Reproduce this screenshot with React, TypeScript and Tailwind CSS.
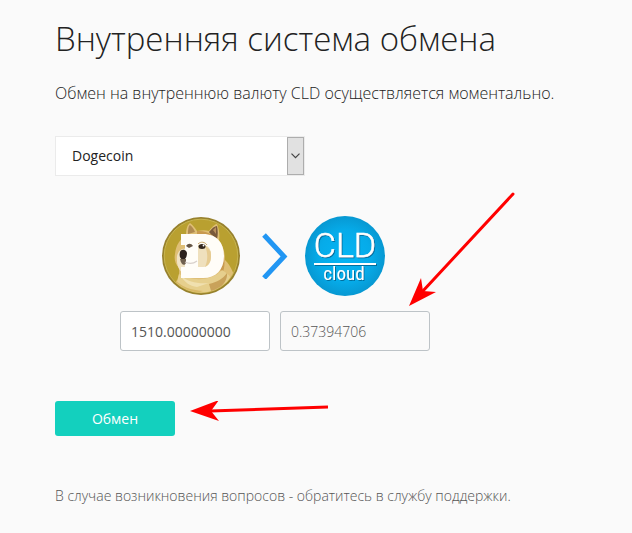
import { useState } from "react";

const RATE = 0.37394706 / 1510;

const DogecoinLogo = () => (
  <svg viewBox="0 0 80 80" className="w-20 h-20" role="img" aria-label="Dogecoin">
    <defs>
      <clipPath id="coin">
        <circle cx="40" cy="40" r="36.5" />
      </clipPath>
    </defs>
    <circle cx="40" cy="40" r="39" fill="#97812d" />
    <circle cx="40" cy="40" r="36.8" fill="#b9a030" stroke="#c9b651" strokeWidth="1" />
    <g clipPath="url(#coin)">
      <path
        d="M12 80 C14 70 19 62 18 52 C14 48 13 43 14 38 C15 29 19 23 25 19 C25 14 26 9 29 7 C32 9 34 12 36 15 C41 14 45 14 48 15 C51 11 54 8 56 8 C58 13 59 19 58 24 C62 30 64 36 64 44 C71 51 75 60 76 80 Z"
        fill="#dfbf76"
      />
      <path d="M27 18 C27 12 28 9 29 9 C32 11 33 14 34 16 Z" fill="#b08a50" />
      <path d="M48 16 C51 12 54 10 56 10 C57 15 57 19 56 23 C53 21 50 19 48 16 Z" fill="#79593b" />
      <path d="M52 14 L55 11 L55 18 Z" fill="#b88f5d" />
      <path d="M36 15 C46 14 55 20 60 30 C64 40 65 50 61 58 L54 40 C50 30 44 24 36 23 Z" fill="#c99a50" />
      <path d="M16 40 C18 33 23 30 30 35 C41 34 50 41 53 49 C52 58 40 61 28 59 C19 58 15 51 16 40 Z" fill="#f0e2c3" />
      <path d="M18 58 C30 65 50 66 61 54 C72 60 76 70 70 80 L12 80 Z" fill="#e6cf8d" />
      <path d="M48 68 C56 66 62 63 66 57 C67 65 60 72 51 78 Z" fill="#c9a25a" />
      <path d="M15 64 C20 71 30 74 42 75 L28 79 L14 76 Z" fill="#d8b866" />
      <path d="M20 60 C27 66 37 68 48 67 L36 71 C29 70 23 66 20 60 Z" fill="#f0e0af" />
    </g>
    <path
      fillRule="evenodd"
      d="M20 18 H42 C56 18 63 27 63 40 C63 54 55 62 42 62 H20 V51 H24 V29 H20 Z M37 29 V51 H41 C47 51 50 47 50 40 C50 33 47 29 41 29 Z"
      fill="#fffdf8"
    />
    <path d="M37 29 H41 C47 29 50 33 50 40 C50 47 47 51 41 51 H37 Z" fill="#efe0bd" />
    <path d="M44 30 C48 32 50 35 50 40 C50 45 48 49 44 51 C47 44 47 37 44 30 Z" fill="#e6cb91" />
    <path d="M19 36 C20 33 25 33 26 37 C26 41 24 44 22 44 C19 43 18 40 19 36 Z" fill="#2b211d" />
    <path d="M19 43 C20 48 23 51 25 47 L25 43 Z" fill="#70604e" />
    <path d="M24 46 C28 48 32 48 36 45" fill="none" stroke="#d8d0cb" strokeWidth="1.200" />
    <path d="M25 30 C27 27 30 27 32 30 L28 32 Z" fill="#665645" />
    <ellipse cx="41" cy="30.500" rx="3.500" ry="2.500" fill="#33261d" />
    <circle cx="42.500" cy="29.500" r="0.900" fill="#fff" />
    <path d="M37 28 C40 25 44 26 46 29" fill="none" stroke="#c7a56a" strokeWidth="1" />
  </svg>
);

const CloudLogo = () => (
  <svg viewBox="0 0 80 80" className="w-20 h-20" role="img" aria-label="CLD cloud">
    <defs>
      <radialGradient id="sky" cx="0.5" cy="0.5" r="0.5">
        <stop offset="0" stopColor="#05b5f4" />
        <stop offset="0.65" stopColor="#06abe9" />
        <stop offset="1" stopColor="#0798d2" />
      </radialGradient>
      <filter id="shade" x="-10%" y="-10%" width="120%" height="120%">
        <feDropShadow dx="1" dy="1" stdDeviation="0.7" floodColor="#04608d" floodOpacity="0.8" />
      </filter>
    </defs>
    <circle cx="40" cy="40" r="40" fill="url(#sky)" />
    <g fill="#fff" textAnchor="middle" filter="url(#shade)">
      <text x="40" y="41" fontSize="34" className="font-[Roboto,sans-serif] font-light" stroke="#fff" strokeWidth="0.500">
        CLD
      </text>
      <rect x="9" y="47" width="62" height="2" />
      <text x="39" y="64" fontSize="19" className="font-['Roboto_Condensed',Roboto,sans-serif]">
        cloud
      </text>
    </g>
  </svg>
);

export default function App() {
  const [currency, setCurrency] = useState("Dogecoin");
  const [amount, setAmount] = useState("1510.00000000");

  const result = (Number(amount) * RATE || 0).toFixed(8);

  return (
    <main className="min-h-screen bg-[#fafafa] px-[55px] pt-4 pb-6 font-['Open_Sans',sans-serif] text-[#222]">
      <h1 className="text-[33px] leading-[46px] font-light">Внутренняя система обмена</h1>
      <p className="mt-[19px] text-base leading-6 font-light">
        Обмен на внутреннюю валюту CLD осуществляется моментально.
      </p>

      <form onSubmit={(e) => e.preventDefault()}>
        <div className="relative mt-[31px] w-[250px]">
          <select
            aria-label="Валюта"
            value={currency}
            onChange={(e) => setCurrency(e.target.value)}
            className="block w-full h-10 appearance-none border border-[#ebebeb] bg-white pl-4 pr-6 text-sm text-[#222]"
          >
            <option>Dogecoin</option>
            <option>Bitcoin</option>
            <option>Litecoin</option>
          </select>
          <span className="pointer-events-none absolute inset-y-px right-px flex w-[17px] items-center justify-center border border-[#adadad] bg-[#e1e1e1]">
            <svg viewBox="0 0 9 6" className="w-[9px] h-[6px]" fill="none" stroke="#444" strokeWidth="1.200">
              <path d="M0.500 0.700 L4.500 4.700 L8.500 0.700" />
            </svg>
          </span>
        </div>

        <div className="mt-10 ml-[65px] w-fit">
          <div className="flex items-center gap-4 pl-[41px]">
            <DogecoinLogo />
            <svg viewBox="0 0 32 46" className="w-8 h-[46px]" fill="none" stroke="#2196f3" strokeWidth="5">
              <path d="M7 2 L27 23.500 L7 45" />
            </svg>
            <CloudLogo />
          </div>

          <div className="mt-[15px] flex gap-[10px]">
            <input
              aria-label="Сумма"
              value={amount}
              onChange={(e) => setAmount(e.target.value)}
              className="w-[150px] h-10 rounded-[3px] border border-[#bdc3c7] bg-white px-[10px] text-sm text-[#555]"
            />
            <div className="relative">
              <input
                aria-label="Получите CLD"
                value={result}
                readOnly
                className="w-[150px] h-10 rounded-[3px] border border-[#bdc3c7] bg-[#fafafa] px-[10px] text-sm font-light text-[#555]"
              />
              <svg
                viewBox="0 0 108 116"
                className="pointer-events-none absolute bottom-11 left-32 h-[116px] w-[108px]"
                fill="#f00"
              >
                <path d="M105 3 L14 101" stroke="#f00" strokeWidth="3" strokeLinecap="round" />
                <path d="M1 115 L13 87 L15 100 L28 101 Z" />
              </svg>
            </div>
          </div>
        </div>

        <div className="relative mt-[50px] w-fit">
          <button
            type="submit"
            className="block h-[35px] w-[120px] rounded-[3px] bg-[#13d0be] text-sm text-white"
          >
            Обмен
          </button>
          <svg
            viewBox="0 0 140 20"
            className="pointer-events-none absolute top-0 left-[135px] h-5 w-[140px]"
            fill="#f00"
          >
            <path d="M20 10 L138 6" stroke="#f00" strokeWidth="3" />
            <path d="M0 10 L29 -1 L21 10 L29 20 Z" />
          </svg>
        </div>
      </form>

      <p className="mt-[50px] text-sm leading-5 font-light text-[#555]">
        В случае возникновения вопросов - обратитесь в службу поддержки.
      </p>
    </main>
  );
}
